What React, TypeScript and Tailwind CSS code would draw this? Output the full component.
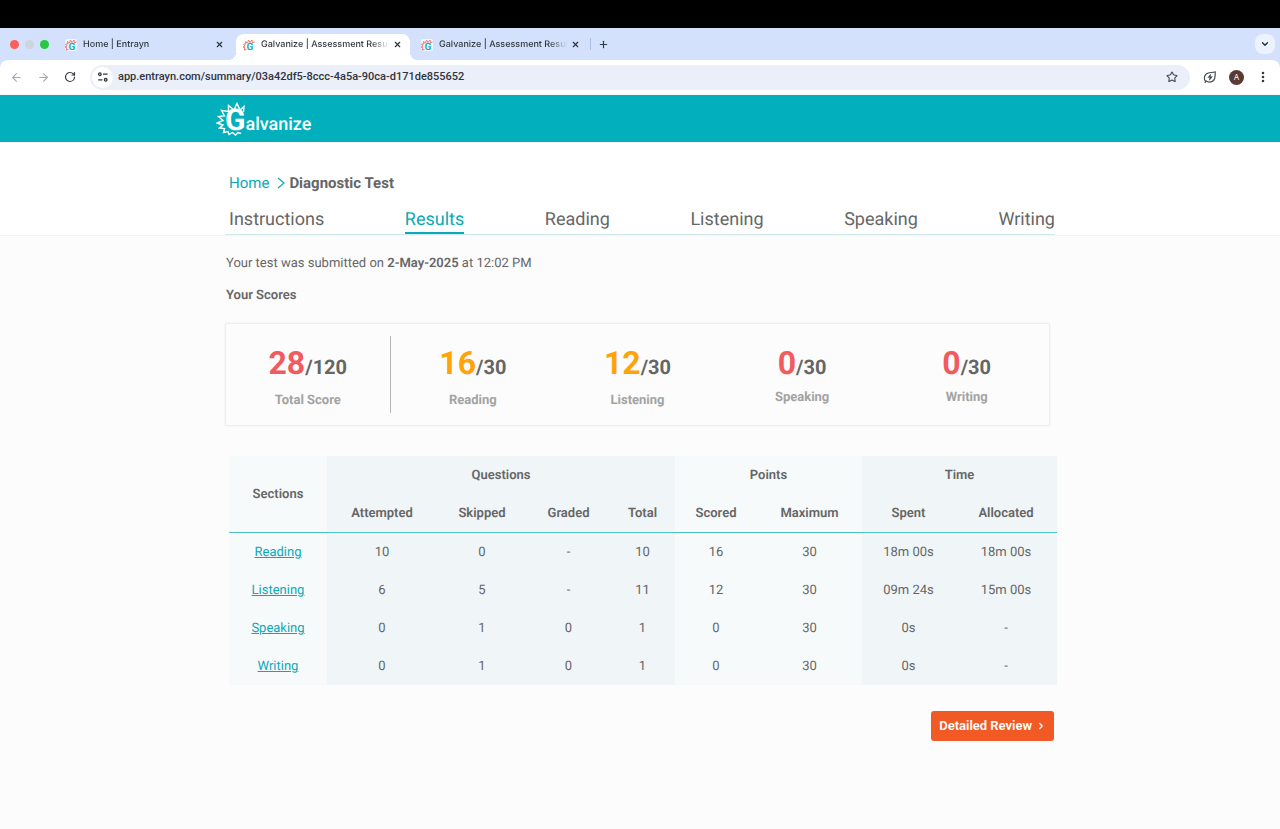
import { ArrowLeft, ArrowRight, ChevronDown, ChevronRight, EllipsisVertical, Plus, RotateCw, Star, X } from "lucide-react";

const NAV = ["Instructions", "Results", "Reading", "Listening", "Speaking", "Writing"];

const SCORES = [
  { label: "Total Score", value: 28, max: 120, color: "text-[#f15b5f]", gap: "mt-[6px]" },
  { label: "Reading", value: 16, max: 30, color: "text-[#ffa30a]", gap: "mt-[6px]" },
  { label: "Listening", value: 12, max: 30, color: "text-[#ffa30a]", gap: "mt-[6px]" },
  { label: "Speaking", value: 0, max: 30, color: "text-[#f15b5f]", gap: "mt-[3px]" },
  { label: "Writing", value: 0, max: 30, color: "text-[#f15b5f]", gap: "mt-[3px]" },
];

const ROWS = [
  { name: "Reading", cells: ["10", "0", "-", "10", "16", "30", "18m 00s", "18m 00s"] },
  { name: "Listening", cells: ["6", "5", "-", "11", "12", "30", "09m 24s", "15m 00s"] },
  { name: "Speaking", cells: ["0", "1", "0", "1", "0", "30", "0s", "-"] },
  { name: "Writing", cells: ["0", "1", "0", "1", "0", "30", "0s", "-"] },
];

function Favicon() {
  return (
    <svg viewBox="0 0 24 24" className="size-3 shrink-0 overflow-visible rounded-xs bg-white/70" aria-hidden="true">
      <path
        d="M7 21l-5 1 2-4-4-2 4-2-3-4 5 0-1-5 4 3 2-6 3 5 4-5 1 6 4-2"
        stroke="#ee7a73"
        strokeWidth="2"
        fill="none"
        strokeLinejoin="round"
      />
      <text x="7" y="22" fontSize="20" fontWeight="700" fontFamily="Roboto, sans-serif" fill="#20aeb8">G</text>
    </svg>
  );
}

function BrowserTab({ title, active = false }: { title: string; active?: boolean }) {
  return (
    <div
      className={
        active
          ? "relative flex h-[26px] w-[174px] items-center rounded-t-lg bg-white pr-2 pb-[5px] pl-[7px]"
          : "flex h-[26px] w-[174px] items-center pr-2 pb-[5px] pl-[7px]"
      }
    >
      {active && (
        <>
          <span className="absolute bottom-0 -left-2 size-2 bg-[radial-gradient(circle_at_0_0,transparent_8px,white_8px)]" />
          <span className="absolute -right-2 bottom-0 size-2 bg-[radial-gradient(circle_at_100%_0,transparent_8px,white_8px)]" />
        </>
      )}
      <Favicon />
      <span className="ml-[6px] min-w-0 flex-1 overflow-hidden text-[9px] leading-4 font-medium whitespace-nowrap text-[#33383f] [mask-image:linear-gradient(to_right,black_86%,transparent)]">
        {title}
      </span>
      <button aria-label="Close tab" className="ml-1 text-[#2b2f36]">
        <X size={9} strokeWidth={3} />
      </button>
    </div>
  );
}

function SiteInfoIcon() {
  return (
    <svg viewBox="0 0 12 12" className="size-3" fill="none" stroke="#33383f" strokeWidth="1.3" aria-hidden="true">
      <circle cx="2.9" cy="3.2" r="1.3" />
      <path d="M6 3.2h4.6M1.2 8.8h4.2" />
      <circle cx="8.7" cy="8.8" r="1.3" />
    </svg>
  );
}

function EnergyIcon() {
  return (
    <svg viewBox="0 0 24 24" className="size-[14px]" fill="none" stroke="#43474e" strokeWidth="2" strokeLinejoin="round" aria-hidden="true">
      <path d="M4.5 19.5C1 15.500 2 9.500 6 6.500C10 3.500 15 5 21 3C20.500 8 22 14 18 18C14 21.500 8.500 21.500 5.500 18.500L3 22" />
      <path d="M13 7.500L8.500 13h3.500l-1 4.500L16 11.500h-3.500z" fill="#43474e" strokeWidth="1" />
    </svg>
  );
}

function Browser() {
  return (
    <div className="font-[Inter,sans-serif]">
      <div className="h-7 bg-black" />
      <div className="flex h-8 items-center bg-[#d3e1fc]">
        <div className="flex w-[58px] shrink-0 items-center gap-[6px] pl-[10px]">
          <span className="size-[9px] rounded-full bg-[#fb5f57]" />
          <span className="size-[9px] rounded-full bg-[#cdd5dd]" />
          <span className="size-[9px] rounded-full bg-[#28c840]" />
        </div>
        <div className="flex items-end gap-1 self-end">
          <BrowserTab title="Home | Entrayn" />
          <BrowserTab title="Galvanize | Assessment Results" active />
          <BrowserTab title="Galvanize | Assessment Results" />
        </div>
        <span className="ml-[2px] h-3 w-px bg-[#a9bfe8]" />
        <button aria-label="New tab" className="ml-[7px] text-[#33383f]">
          <Plus size={11} strokeWidth={2.5} />
        </button>
        <button aria-label="Search tabs" className="mr-[5px] ml-auto flex size-5 items-center justify-center rounded-lg bg-[#ecf2fe] text-[#23272e]">
          <ChevronDown size={10} strokeWidth={3} />
        </button>
      </div>
      <div className="bg-[#d3e1fc]">
        <div className="flex h-[34px] items-center rounded-t-lg bg-white">
          <div className="flex shrink-0 items-center gap-[14px] pl-[10px]">
            <button aria-label="Back" className="text-[#a6a9ae]"><ArrowLeft size={13} /></button>
            <button aria-label="Forward" className="text-[#a6a9ae]"><ArrowRight size={13} /></button>
            <button aria-label="Reload" className="text-[#3a3e45]"><RotateCw size={12} strokeWidth={2.4} /></button>
          </div>
          <div className="ml-[14px] flex h-[25px] flex-1 items-center rounded-full bg-[#ebeffa] pr-3 pl-[2px]">
            <button aria-label="Site information" className="flex size-[21px] items-center justify-center rounded-full bg-white">
              <SiteInfoIcon />
            </button>
            <input
              aria-label="Address"
              readOnly
              value="app.entrayn.com/summary/03a42df5-8ccc-4a5a-90ca-d171de855652"
              className="ml-[5px] min-w-0 flex-1 bg-transparent font-[Roboto,sans-serif] text-[11px] font-medium text-[#30343b] outline-none"
            />
            <button aria-label="Bookmark" className="text-[#43474e]"><Star size={12} strokeWidth={2.2} /></button>
          </div>
          <div className="flex shrink-0 items-center gap-3 pr-[10px] pl-[13px]">
            <button aria-label="Energy saver"><EnergyIcon /></button>
            <button aria-label="Profile" className="flex size-[15px] items-center justify-center rounded-full bg-[#5a3a33] text-[8px] text-white">A</button>
            <button aria-label="Menu" className="text-[#33383f]"><EllipsisVertical size={14} strokeWidth={2.4} /></button>
          </div>
        </div>
      </div>
    </div>
  );
}

function Logo() {
  return (
    <a href="#home" className="relative -ml-1 flex items-baseline text-white">
      <svg viewBox="0 0 34 36" className="absolute -top-[3px] -left-[5px] h-9 w-[34px]" fill="none" stroke="white" strokeWidth="1.4" strokeLinejoin="miter" aria-hidden="true">
        <path d="M27.500 10L28 4.500L24 8L21 1.500L18 8L12.500 3.500L12.500 9.500L5.500 8.500L8.500 14L2.500 14.500L7 18.500L1 21L7 23L3.500 26L8.500 26.500L7.500 30.500L12 29.500L13 32.500L16.500 30.500L19.500 33L22 30.500L25 31.500" />
      </svg>
      <span className="relative pl-1 text-[30px] leading-8 font-bold">G</span>
      <span className="relative text-[18px] leading-8 font-medium">alvanize</span>
    </a>
  );
}

export default function App() {
  return (
    <div className="min-h-screen bg-[#fcfcfc] font-[Roboto,sans-serif] text-[#666] [text-rendering:geometricPrecision]">
      <Browser />
      <header className="mt-px h-[47px] bg-[#02b0bd] shadow-sm">
        <div className="mx-auto flex max-w-[830px] pt-[10px]"><Logo /></div>
      </header>
      <section className="border-b border-[#f3f3f3] bg-white pt-[29px]">
        <div className="mx-auto max-w-[830px]">
          <nav aria-label="Breadcrumb" className="flex items-center pl-1 text-[15px] leading-6">
            <a href="#home" className="text-[#0ba9b5]">Home</a>
            <svg viewBox="0 0 8 12" className="mx-1 ml-2 h-3 w-2" fill="none" stroke="#0ba9b5" strokeWidth="1.2" aria-hidden="true">
              <path d="M1 1l6 5-6 5" />
            </svg>
            <span className="font-bold">Diagnostic Test</span>
          </nav>
          <nav aria-label="Sections" className="mt-[13px] flex justify-between border-b border-[#cfeaeb] pl-1 text-[18px] leading-[24px]">
            {NAV.map((item) => (
              <a
                key={item}
                href={`#${item.toLowerCase()}`}
                className={item === "Results" ? "border-b-2 border-[#0ba9b5] text-[#0ba9b5]" : "border-b-2 border-transparent"}
              >
                {item}
              </a>
            ))}
          </nav>
        </div>
      </section>
      <main className="mx-auto max-w-[830px] pt-[18px] pb-8 text-[13px]">
        <p className="pl-px leading-5">
          Your test was submitted on <strong className="font-semibold">2-May-2025</strong> at 12:02 PM
        </p>
        <h2 className="mt-3 pl-px leading-5 font-semibold">Your Scores</h2>
        <div className="mt-[17px] mr-[5px] grid grid-cols-5 rounded-xs border border-[#eee] py-3 shadow-[0_0_2px_#e8e8e8]">
          {SCORES.map((s, i) => (
            <div key={s.label} className={i === 0 ? "border-r border-[#b5b5b5] pt-[9px] pb-[2px] text-center" : "pt-[9px] pb-[2px] text-center"}>
              <div className="text-[20px] leading-9 font-bold">
                <span className={`text-[32px] ${s.color}`}>{s.value}</span>/{s.max}
              </div>
              <div className={`text-[13px] leading-5 font-bold text-[#a3a3a3] ${s.gap}`}>{s.label}</div>
            </div>
          ))}
        </div>
        <div className="mt-[30px] -mr-[2px] pl-1">
          <table className="w-full table-fixed border-separate border-spacing-0 text-center [&_td]:pt-[2px] [&_th]:pt-[2px]">
            <colgroup>
              <col className="w-[98px] bg-[#f7fafb]" />
              <col className="w-[110px] bg-[#f0f5f8]" />
              <col className="w-[90px] bg-[#f0f5f8]" />
              <col className="w-[83px] bg-[#f0f5f8]" />
              <col className="w-[65px] bg-[#f0f5f8]" />
              <col className="w-[82px] bg-[#f7fafb]" />
              <col className="w-[105px] bg-[#f7fafb]" />
              <col className="w-[93px] bg-[#f0f5f8]" />
              <col className="w-[102px] bg-[#f0f5f8]" />
            </colgroup>
            <thead>
              <tr className="h-[38px]">
                <th rowSpan={2} className="border-b border-[#4fc3cb] font-semibold">Sections</th>
                <th colSpan={4} className="font-semibold">Questions</th>
                <th colSpan={2} className="font-semibold">Points</th>
                <th colSpan={2} className="font-semibold">Time</th>
              </tr>
              <tr className="h-[39px]">
                {["Attempted", "Skipped", "Graded", "Total", "Scored", "Maximum", "Spent", "Allocated"].map((h) => (
                  <th key={h} className="border-b border-[#4fc3cb] font-semibold">{h}</th>
                ))}
              </tr>
            </thead>
            <tbody>
              {ROWS.map((row) => (
                <tr key={row.name} className="h-[38px]">
                  <td><a href={`#${row.name.toLowerCase()}`} className="text-[#0ba9b5] underline">{row.name}</a></td>
                  {row.cells.map((c, i) => (
                    <td key={i}>{c}</td>
                  ))}
                </tr>
              ))}
            </tbody>
          </table>
        </div>
        <div className="mt-[26px] flex justify-end pr-px">
          <button className="flex h-[30px] items-center gap-1 rounded-[3px] bg-[#f15a24] px-2 font-semibold text-white">
            Detailed Review
            <ChevronRight size={10} strokeWidth={3} />
          </button>
        </div>
      </main>
    </div>
  );
}
